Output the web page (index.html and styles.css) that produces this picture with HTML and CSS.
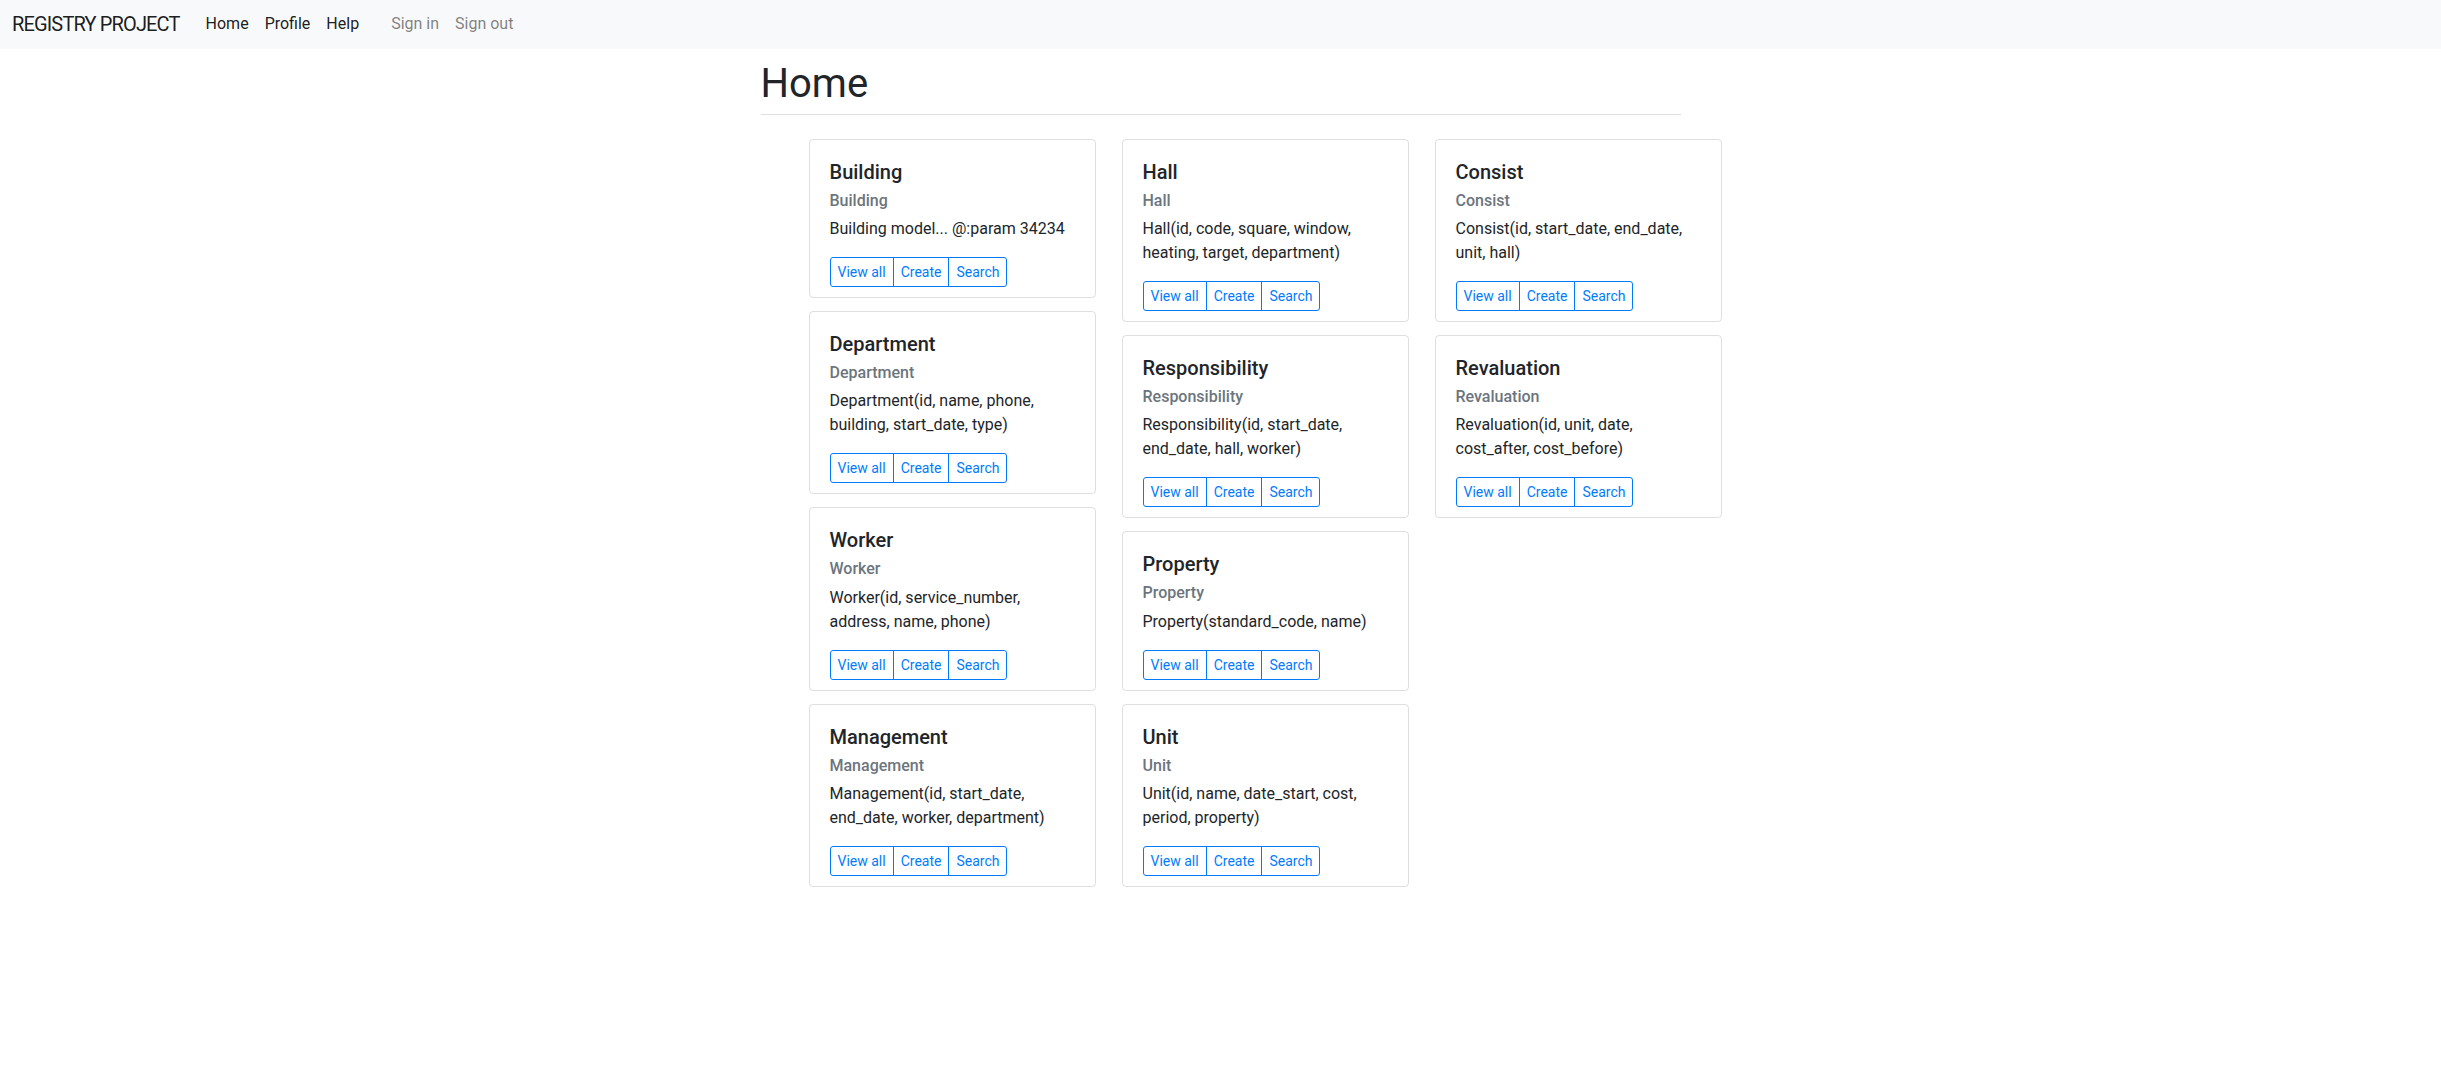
FILE: index.html
```html
<!DOCTYPE html>
<html lang="en">
<head>
<meta charset="utf-8">
<title>Registry Project</title>
<link rel="stylesheet" href="styles.css">
</head>
<body>
<nav class="navbar">
  <a class="brand" href="#">REGISTRY PROJECT</a>
  <ul class="nav">
    <li><a class="nav-link" href="#">Home</a></li>
    <li><a class="nav-link" href="#">Profile</a></li>
    <li><a class="nav-link" href="#">Help</a></li>
  </ul>
  <ul class="nav nav-auth">
    <li><a class="nav-link muted" href="#">Sign in</a></li>
    <li><a class="nav-link muted" href="#">Sign out</a></li>
  </ul>
</nav>
<main class="container">
  <h1 class="page-title">Home</h1>
  <hr class="rule">
  <div class="card-columns">
    <div class="column">
      <div class="card">
        <h5 class="card-title">Building</h5>
        <h6 class="card-subtitle">Building</h6>
        <p class="card-text">Building model... @:param 34234</p>
        <div class="btn-group"><a class="btn" href="#">View all</a><a class="btn" href="#">Create</a><a class="btn" href="#">Search</a></div>
      </div>
      <div class="card">
        <h5 class="card-title">Department</h5>
        <h6 class="card-subtitle">Department</h6>
        <p class="card-text">Department(id, name, phone, building, start_date, type)</p>
        <div class="btn-group"><a class="btn" href="#">View all</a><a class="btn" href="#">Create</a><a class="btn" href="#">Search</a></div>
      </div>
      <div class="card">
        <h5 class="card-title">Worker</h5>
        <h6 class="card-subtitle">Worker</h6>
        <p class="card-text">Worker(id, service_number, address, name, phone)</p>
        <div class="btn-group"><a class="btn" href="#">View all</a><a class="btn" href="#">Create</a><a class="btn" href="#">Search</a></div>
      </div>
      <div class="card">
        <h5 class="card-title">Management</h5>
        <h6 class="card-subtitle">Management</h6>
        <p class="card-text">Management(id, start_date, end_date, worker, department)</p>
        <div class="btn-group"><a class="btn" href="#">View all</a><a class="btn" href="#">Create</a><a class="btn" href="#">Search</a></div>
      </div>
    </div>
    <div class="column">
      <div class="card">
        <h5 class="card-title">Hall</h5>
        <h6 class="card-subtitle">Hall</h6>
        <p class="card-text">Hall(id, code, square, window, heating, target, department)</p>
        <div class="btn-group"><a class="btn" href="#">View all</a><a class="btn" href="#">Create</a><a class="btn" href="#">Search</a></div>
      </div>
      <div class="card">
        <h5 class="card-title">Responsibility</h5>
        <h6 class="card-subtitle">Responsibility</h6>
        <p class="card-text">Responsibility(id, start_date, end_date, hall, worker)</p>
        <div class="btn-group"><a class="btn" href="#">View all</a><a class="btn" href="#">Create</a><a class="btn" href="#">Search</a></div>
      </div>
      <div class="card">
        <h5 class="card-title">Property</h5>
        <h6 class="card-subtitle">Property</h6>
        <p class="card-text">Property(standard_code, name)</p>
        <div class="btn-group"><a class="btn" href="#">View all</a><a class="btn" href="#">Create</a><a class="btn" href="#">Search</a></div>
      </div>
      <div class="card">
        <h5 class="card-title">Unit</h5>
        <h6 class="card-subtitle">Unit</h6>
        <p class="card-text">Unit(id, name, date_start, cost, period, property)</p>
        <div class="btn-group"><a class="btn" href="#">View all</a><a class="btn" href="#">Create</a><a class="btn" href="#">Search</a></div>
      </div>
    </div>
    <div class="column">
      <div class="card">
        <h5 class="card-title">Consist</h5>
        <h6 class="card-subtitle">Consist</h6>
        <p class="card-text">Consist(id, start_date, end_date, unit, hall)</p>
        <div class="btn-group"><a class="btn" href="#">View all</a><a class="btn" href="#">Create</a><a class="btn" href="#">Search</a></div>
      </div>
      <div class="card">
        <h5 class="card-title">Revaluation</h5>
        <h6 class="card-subtitle">Revaluation</h6>
        <p class="card-text">Revaluation(id, unit, date, cost_after, cost_before)</p>
        <div class="btn-group"><a class="btn" href="#">View all</a><a class="btn" href="#">Create</a><a class="btn" href="#">Search</a></div>
      </div>
    </div>
  </div>
</main>
</body>
</html>
```
FILE: styles.css
```css
* { box-sizing: border-box; }
html, body { margin: 0; padding: 0; }
body {
  font-family: Roboto, "Liberation Sans", sans-serif;
  font-size: 16px;
  line-height: 24px;
  color: #212529;
  background: #fff;
}
a { text-decoration: none; }

.navbar {
  display: flex;
  align-items: center;
  height: 49px;
  padding: 0 12px 1px;
  background: #f8f9fa;
}
.brand {
  font-size: 20px;
  line-height: 30px;
  letter-spacing: -0.85px;
  color: rgba(0,0,0,.9);
  margin-right: 18px;
}
.nav {
  display: flex;
  list-style: none;
  margin: 0;
  padding: 0;
}
.nav-auth { margin-left: 16px; }
.nav-link {
  display: block;
  padding: 0 8px;
  color: rgba(0,0,0,.9);
}
.nav-link.muted { color: rgba(0,0,0,.5); }

.container {
  width: 920px;
  margin: 0 auto;
  padding-top: 11px;
}
.page-title {
  margin: 0 0 6px;
  font-size: 40px;
  line-height: 48px;
  font-weight: 400;
}
.rule {
  margin: 0;
  border: 0;
  border-top: 1px solid rgba(0,0,0,.12);
}
.card-columns {
  display: flex;
  gap: 26px;
  margin: 24px 0 0 48px;
  width: 914px;
}
.column {
  width: 287px;
  flex: none;
  display: flex;
  flex-direction: column;
  gap: 13px;
}
.card {
  border: 1px solid rgba(0,0,0,.125);
  border-radius: 4px;
  padding: 20px 20px 10px;
}
.card-title {
  margin: 0 0 12px;
  font-size: 20px;
  line-height: 24px;
  font-weight: 500;
}
.card-subtitle {
  margin: -5px 0 7px;
  font-size: 16px;
  line-height: 19.2px;
  font-weight: 500;
  color: #6c757d;
}
.card-text { margin: 0 0 16px; }
.btn-group { display: inline-flex; }
.btn {
  display: block;
  padding: 4px 7px;
  font-size: 14px;
  line-height: 20px;
  color: #007bff;
  border: 1px solid #007bff;
}
.btn + .btn { margin-left: -1px; }
.btn:first-child { border-radius: 3px 0 0 3px; }
.btn:last-child { border-radius: 0 3px 3px 0; }
```
